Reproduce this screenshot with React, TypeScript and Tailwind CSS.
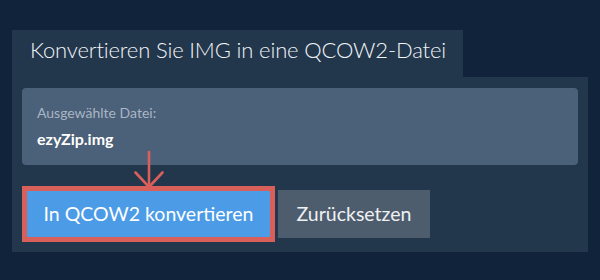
import React from 'react';

const font = { fontFamily: 'Lato, "Open Sans", sans-serif' };

export default function App() {
  return (
    <div className="w-[600px] h-[280px] bg-[#11233a] pt-[30px] pl-[12px]" style={font}>
      {/* Tab */}
      <div className="w-[451px] h-[47px] bg-[#22364c] pl-[18px] pt-[3px]">
        <h1 className="text-[22px] font-light text-[#f1f4f7] leading-[34px] tracking-[-0.15px]">
          Konvertieren Sie IMG in eine QCOW2-Datei
        </h1>
      </div>

      {/* Panel */}
      <div className="w-[576px] bg-[#22364c] px-[10px] pt-[11px] pb-[10px]">
        <div className="h-[77px] rounded-[4px] bg-[#4b6079] pl-[15px] pt-[16px]">
          <p className="text-[14px] text-[#a9b6c4] leading-[18px]">Ausgewählte Datei:</p>
          <p className="text-[16px] font-bold text-white leading-[20px] mt-[7px]">ezyZip.img</p>
        </div>

        <div className="flex items-center gap-[3px] mt-[21px]">
          <div className="relative border-[5px] border-[#d95f5a]">
            {/* Pfeil */}
            <svg
              className="absolute left-1/2 -translate-x-1/2 bottom-full mb-[1px]"
              width="32"
              height="40"
              viewBox="0 0 32 40"
              fill="none"
              stroke="#d95f5a"
              strokeWidth="2.6"
              strokeLinecap="round"
              strokeLinejoin="round"
            >
              <path d="M16 2 V37" />
              <path d="M2.5 22.5 L16 37 L29.5 22.5" />
            </svg>
            <button className="w-[243px] h-[46px] bg-[#4b9be6] text-white text-[19.5px] leading-none">
              In QCOW2 konvertieren
            </button>
          </div>
          <button className="w-[152px] h-[48px] bg-[#4e5d6d] text-[#eef1f4] text-[19.5px] leading-none">
            Zurücksetzen
          </button>
        </div>
      </div>
    </div>
  );
}
